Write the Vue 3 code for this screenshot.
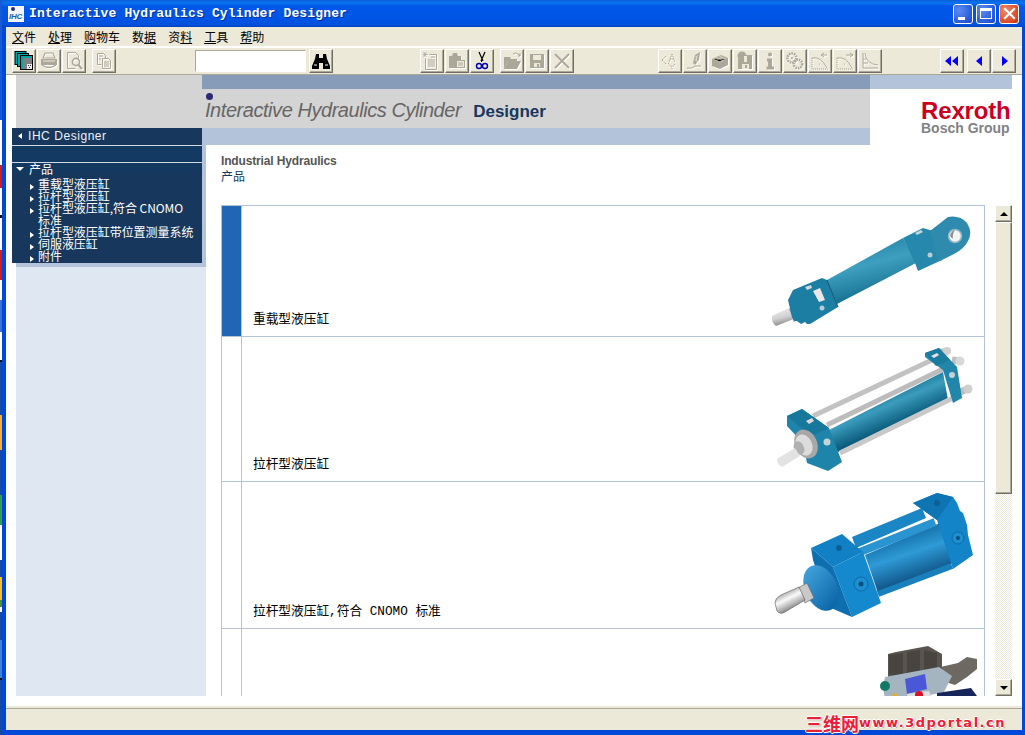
<template>
  <div class="window">
    <div class="desk"></div>
    <div class="frame">
      <!-- title bar -->
      <div class="titlebar">
        <div class="appicon"><i></i><span>IHC</span></div>
        <div class="title">Interactive Hydraulics Cylinder Designer</div>
        <div class="caption">
          <button class="cbtn min"><i></i></button>
          <button class="cbtn max"><i></i></button>
          <button class="cbtn close">
            <svg width="13" height="13" viewBox="0 0 13 13"><path d="M2 2l9 9M11 2l-9 9" stroke="#fff" stroke-width="2.2" stroke-linecap="square" /></svg>
          </button>
        </div>
      </div>

      <div class="inner">
        <div class="menubar">
          <span v-for="m in menus" :key="m.after + m.u">{{ m.before }}<u>{{ m.u }}</u>{{ m.after }}</span>
        </div>

        <div class="toolbar">
          <div v-for="g in toolGroups" :key="g.cls" class="tgroup" :class="g.cls">
            <template v-for="name in g.items" :key="name">
              <input v-if="name === 'input'" class="search" />
              <button v-else class="tbtn">
                <svg width="20" height="20" viewBox="0 0 20 20" :class="{ off: !enabled.includes(name) }" v-html="icons[name]"></svg>
              </button>
            </template>
          </div>
        </div>

        <div class="body">
          <!-- left navigation column -->
          <aside class="left">
            <div class="left-top"></div>
            <div class="left-rest">
              <div class="nav-shadow">
                <div class="nav">
                  <div class="nav-head"><b class="tri-left"></b>IHC Designer</div>
                  <div class="nav-gap"></div>
                  <div class="nav-group"><b class="tri-down"></b>产品</div>
                  <div v-for="n in navItems" :key="n" class="nav-item"><b class="tri-right"></b><span>{{ n }}</span></div>
                </div>
              </div>
            </div>
          </aside>

          <main class="right">
            <div class="banner">
              <div class="banner-main">
                <div class="strip-dark"></div>
                <div class="banner-title">
                  <i class="dot"></i>
                  <div><span class="bt-a">Interactive Hydraulics Cylinder</span><span class="bt-b">Designer</span></div>
                </div>
                <div class="strip-light"></div>
              </div>
              <div class="banner-logo">
                <div class="strip-end"></div>
                <div class="logo">
                  <div class="rexroth">Rexroth</div>
                  <div class="bosch">Bosch Group</div>
                </div>
              </div>
            </div>

            <div class="page">
              <div class="crumb">
                <div class="crumb-a">Industrial Hydraulics</div>
                <div class="crumb-b">产品</div>
              </div>
              <div class="list-area">
                <div class="list">
                  <!-- row 1 -->
                  <div class="row r1">
                    <div class="mark on"></div>
                    <div class="cell">
                      <span class="label">重载型液压缸</span>
                      <svg width="225" height="130" viewBox="760 206 225 130">
                        <defs>
                          <linearGradient id="t1" x1="0" y1="0" x2="0.35" y2="1">
                            <stop offset="0" stop-color="#167598" /><stop offset=".5" stop-color="#3f9fbf" /><stop offset="1" stop-color="#0f6a8c" />
                          </linearGradient>
                          <linearGradient id="s1" x1="0" y1="0" x2="0.3" y2="1">
                            <stop offset="0" stop-color="#f2f2f2" /><stop offset=".6" stop-color="#d0d0d0" /><stop offset="1" stop-color="#8a8a8a" />
                          </linearGradient>
                        </defs>
                        <path d="M772 316l17-8 7 10-20 8q-5-4-4-10z" fill="url(#s1)" />
                        <path d="M789 309l8-6 5 13-8 6z" fill="#a0a0a0" />
                        <path d="M827 280L903 238L916 263L837 304z" fill="url(#t1)" />
                        <path d="M788 300l5-10 29-12 5 2 11 27-28 17-3 0-2-2-4 2-4-3-3 0-2-4z" fill="#1c7ea3" />
                        <path d="M827 280l11 27" stroke="#0d566f" stroke-width="1" fill="none" />
                        <path d="M813 291l7-3 5 12-6 2z" fill="#e8e8e8" />
                        <path d="M805 287l6-2 1 3-5 2z" fill="#cfd8dc" /><circle cx="822" cy="308" r="2.5" fill="#b8ccd4" />
                        <path d="M903 238l20-10 10 3 9 29-24 11-3-8z" fill="#2588ac" />
                        <path d="M930 231l18-14q12-2 19 6 6 9 1 18-4 8-14 13l-14 7-2 0z" fill="#2e8bad" />
                        <circle cx="955" cy="236" r="6.5" fill="#f4f4f4" stroke="#8eb8c8" stroke-width="1.5" />
                        <path d="M950 236q1-5 5-6-3 4-2 9z" fill="#8b8b8b" />
                        <path d="M915 233l6-3 2 2-6 3z" fill="#c8d6dc" /><circle cx="930" cy="255" r="2.5" fill="#b8ccd4" />
                      </svg>
                    </div>
                  </div>
                  <!-- row 2 -->
                  <div class="row r2">
                    <div class="mark"></div>
                    <div class="cell">
                      <span class="label">拉杆型液压缸</span>
                      <svg width="225" height="144" viewBox="760 337 225 144">
                        <defs>
                          <linearGradient id="t2" gradientUnits="userSpaceOnUse" x1="880" y1="390" x2="895" y2="425">
                            <stop offset="0" stop-color="#0e6a8c" /><stop offset=".45" stop-color="#3c9cbc" /><stop offset="1" stop-color="#0a5c7c" />
                          </linearGradient>
                        </defs>
                        <path d="M940 352l8 0M952 360l8 1M960 392l8-3" stroke="#bdbdbd" stroke-width="7" />
                        <circle cx="947" cy="351" r="4" fill="#cfcfcf" /><circle cx="960" cy="361" r="4.5" fill="#d8d8d8" /><circle cx="968" cy="389" r="4.5" fill="#cfcfcf" />
                        <path d="M813 416L932 360" stroke="#c2c2c2" stroke-width="5" />
                        <path d="M827 431L943 372L948 400L838 452z" fill="url(#t2)" />
                        <path d="M827 425L943 369" stroke="#bcbcbc" stroke-width="5" />
                        <path d="M840 453L953 398" stroke="#c8c8c8" stroke-width="5" />
                        <path d="M925 353l14-5 18 19 5 31-9 5-10-33-18-13z" fill="#2186aa" />
                        <path d="M925 353l14-5 11 12-14 6z" fill="#1c7c9f" />
                        <path d="M931 356l6-3 2 2-5 3z" fill="#e4e4e4" />
                        <circle cx="952" cy="375" r="3" fill="#c4d2d8" />
                        <path d="M787 416l15-7 27 19 13 34-14 9-21-8-4-20-16-17z" fill="#1f84a9" />
                        <path d="M787 416l15-7 27 19-18 8z" fill="#18789b" />
                        <path d="M806 421l6-3 2 3-5 3z" fill="#dadada" />
                        <circle cx="827" cy="442" r="3.5" fill="#c6d3d9" />
                        <ellipse cx="806" cy="444" rx="11" ry="15" transform="rotate(-25 806 444)" fill="#a8a8a8" />
                        <ellipse cx="804" cy="445" rx="8" ry="11" transform="rotate(-25 804 445)" fill="#dcdcdc" />
                        <ellipse cx="799" cy="448" rx="5" ry="7" transform="rotate(-25 799 448)" fill="#b0b0b0" />
                        <path d="M777 459l18-11 5 8-18 11q-5-3-5-8z" fill="#e2e2e2" />
                      </svg>
                    </div>
                  </div>
                  <!-- row 3 -->
                  <div class="row r3">
                    <div class="mark"></div>
                    <div class="cell">
                      <span class="label">拉杆型液压缸,符合 CNOMO 标准</span>
                      <svg width="225" height="146" viewBox="760 482 225 146">
                        <defs>
                          <linearGradient id="t3" gradientUnits="userSpaceOnUse" x1="890" y1="530" x2="910" y2="590">
                            <stop offset="0" stop-color="#0b5f96" /><stop offset=".45" stop-color="#2e9ad6" /><stop offset="1" stop-color="#063f70" />
                          </linearGradient>
                          <linearGradient id="s3" gradientUnits="userSpaceOnUse" x1="785" y1="590" x2="795" y2="610">
                            <stop offset="0" stop-color="#9a9a9a" /><stop offset=".4" stop-color="#fafafa" /><stop offset="1" stop-color="#707070" />
                          </linearGradient>
                          <linearGradient id="g3" gradientUnits="userSpaceOnUse" x1="810" y1="570" x2="830" y2="610">
                            <stop offset="0" stop-color="#3f9ed8" /><stop offset="1" stop-color="#0a64a6" />
                          </linearGradient>
                        </defs>
                        <path d="M852 537L922 508L926 518L856 548z" fill="#1a86c4" />
                        <path d="M865 555L940 523L953 563L878 593z" fill="url(#t3)" />
                        <path d="M860 552L935 522" stroke="#2a94d0" stroke-width="8" />
                        <path d="M878 594L952 566" stroke="#1a80bc" stroke-width="6" />
                        <path d="M913 503l24-10 16 4 4 6 3 8 3 2 4 12 1 10 5 20-20 14-16-49z" fill="#1484c8" />
                        <path d="M913 503l24-10 16 4-16 23z" fill="#0e74b4" />
                        <circle cx="937" cy="503" r="3" fill="#0c5f96" /><circle cx="958" cy="538" r="6" fill="#1d8fd0" stroke="#0c6aa6" /><circle cx="958" cy="538" r="2" fill="#0a507e" />
                        <path d="M811 548l31-14 21 18-30 15z" fill="#1280c4" />
                        <path d="M833 567l30-15 18 51-29 14z" fill="#1489ce" />
                        <path d="M811 548l22 19 19 50-21-9-8-18-10-30z" fill="#0d6fb0" />
                        <circle cx="839" cy="548" r="3" fill="#0c5f96" /><circle cx="861" cy="584" r="7" fill="#1d8fd0" stroke="#0c6aa6" /><circle cx="861" cy="584" r="2.5" fill="#0a507e" />
                        <ellipse cx="821" cy="588" rx="16" ry="24" transform="rotate(-25 821 588)" fill="url(#g3)" />
                        <path d="M798 588l9-5 7 15-9 5z" fill="#c8c8c8" stroke="#606060" stroke-width=".6" />
                        <path d="M775 603q0-5 6-8l18-8 6 13-20 12q-5 3-8-1z" fill="url(#s3)" stroke="#555" stroke-width=".6" />
                      </svg>
                    </div>
                  </div>
                  <!-- row 4, clipped by the scroll area -->
                  <div class="row r4">
                    <div class="mark"></div>
                    <div class="cell">
                      <span class="label"></span>
                      <svg width="225" height="200" viewBox="760 629 225 200">
                        <path d="M936 668l22-5 9-6 10 2 0 10-10 8-12 8-19-6z" fill="#6e6862" />
                        <path d="M888 654l8-2 32-6 14 8 0 30-15 8-39-8z" fill="#5a544e" />
                        <path d="M889 655l14-2 0 25-14-4zM907 652l13-2 0 26-13 2zM924 650l13 3 0 24-13-2z" fill="#48443f" />
                        <path d="M885 677l54-10 13 9-8 16-56 12q-7-10-3-27z" fill="#a4b4c0" />
                        <circle cx="885" cy="686" r="5" fill="#107a66" />
                        <path d="M905 679l20-5 2 15-20 5z" fill="#4a58d8" />
                        <path d="M907 694l22-3 4 10-24 4z" fill="#e0e0e0" />
                        <circle cx="919" cy="695" r="4" fill="#d8102a" />
                        <circle cx="895" cy="696" r="3" fill="#d8b040" />
                        <path d="M937 693l34-5 6 8-40 6z" fill="#16265a" />
                      </svg>
                    </div>
                  </div>
                </div>
                <div class="scrollbar">
                  <div class="sb-btn"><b class="sb-up"></b></div>
                  <div class="sb-thumb"></div>
                  <div class="sb-track"></div>
                  <div class="sb-btn"><b class="sb-down"></b></div>
                </div>
              </div>
            </div>
          </main>
        </div>

        <div class="status">
          <div class="watermark"><span class="wm-cn">三维网</span><span class="wm-en">www.3dportal.cn</span></div>
        </div>
      </div>
    </div>
  </div>
</template>

<script setup>
const menus = [
  { before: '', u: '文', after: '件' },
  { before: '', u: '处', after: '理' },
  { before: '', u: '购', after: '物车' },
  { before: '数', u: '据', after: '' },
  { before: '资', u: '料', after: '' },
  { before: '', u: '工', after: '具' },
  { before: '', u: '帮', after: '助' }
]

const navItems = [
  '重载型液压缸',
  '拉杆型液压缸',
  '拉杆型液压缸,符合 CNOMO 标准',
  '拉杆型液压缸带位置测量系统',
  '伺服液压缸',
  '附件'
]

const toolGroups = [
  { cls: 'g1', items: ['stack', 'print', 'preview'] },
  { cls: 'g2', items: ['copy'] },
  { cls: 'g3', items: ['input'] },
  { cls: 'g4', items: ['binoc'] },
  { cls: 'g5', items: ['note', 'clip', 'cut'] },
  { cls: 'g6', items: ['open', 'save', 'del'] },
  { cls: 'g7', items: ['dims', 'pen', 'block', 'disk2', 'info', 'gears', 'curveL', 'curveR', 'curve'] },
  { cls: 'g8', items: ['first'] },
  { cls: 'g9', items: ['prev', 'next'] }
]

const enabled = ['stack', 'binoc', 'cut', 'first', 'prev', 'next']

// disabled icons all use the same grey
const G = '#aca899'
const icons = {
  stack: `<rect x="1" y="0.5" width="11" height="13" fill="#00a5a5" stroke="#000"/><rect x="3.5" y="2.5" width="11" height="13" fill="#00a5a5" stroke="#000"/><rect x="6.5" y="4.5" width="12" height="14" fill="#00a5a5" stroke="#000"/><rect x="9" y="7" width="9" height="11" fill="#808080"/><rect x="13" y="13" width="5" height="5" fill="#eee"/><path d="M14 14h1v1h-1zM16 14h1v1h-1zM15 16h1v1h-1z" fill="#333"/>`,
  print: `<path d="M6 2h8l2 5H4z" fill="none" stroke="${G}" stroke-width="1.2"/><path d="M2 8h16v6H2z" fill="${G}"/><path d="M4 10h12" stroke="#ece9d8"/><path d="M3 14q7 5 14 0" fill="none" stroke="${G}" stroke-width="1.4"/>`,
  preview: `<path d="M3.500 1.500h8l3 3v3M3.500 1.500v16h8" fill="none" stroke="${G}"/><circle cx="12" cy="11" r="3.600" fill="none" stroke="${G}" stroke-width="1.600"/><path d="M14.500 14l3.500 4" stroke="${G}" stroke-width="2"/>`,
  copy: `<path d="M3.500 2.500h6l2 2v3h-2M3.500 2.500v11h4" fill="none" stroke="${G}"/><path d="M8.500 7.500h6l2 2v8h-8z" fill="none" stroke="${G}"/><path d="M5 5h4M5 8h2M10 11h5M10 13h5M10 15h5" stroke="${G}"/>`,
  binoc: `<path d="M5 3h3v4h4V3h3l1 5 3 7v3h-7v-6h-4v6H1v-3l3-7z" fill="#000"/><path d="M3 14h3M14 14h3" stroke="#fff"/>`,
  note: `<path d="M7.500 3.500h7v15h-11v-11" fill="none" stroke="${G}"/><path d="M6 9h7M6 11h7M6 13h7M6 15h7M9 6h4" stroke="${G}"/><path d="M3 1v5M1 3.500h5M1.500 1.500l3 4M4.500 1.500l-3 4" stroke="${G}" stroke-width=".8"/>`,
  clip: `<path d="M2 5h3l1-3h4l1 3h3v4h-4v8H2z" fill="${G}"/><rect x="9.500" y="9.500" width="8" height="7" fill="#ece9d8" stroke="${G}"/><path d="M11 12h5M11 14h5" stroke="${G}"/>`,
  cut: `<path d="M7 1l4 9M13 1l-4 9" stroke="#000" stroke-width="1.2"/><path d="M9.500 9v2" stroke="#000"/><circle cx="7" cy="15" r="2.500" fill="none" stroke="#0000b0" stroke-width="1.400"/><circle cx="13" cy="15" r="2.500" fill="none" stroke="#0000b0" stroke-width="1.400"/>`,
  open: `<path d="M2 6h6l1 2h6v2H6l-4 8z" fill="${G}"/><path d="M6 10h13l-4 8H2z" fill="${G}"/><path d="M11 3q3-2 5 0l2 2-2 0M18 2v3" fill="none" stroke="${G}"/>`,
  save: `<path d="M3 3h14v14H3z" fill="${G}"/><rect x="6" y="4" width="8" height="5" fill="#ece9d8"/><rect x="7" y="12" width="6" height="4" fill="#ece9d8"/><rect x="10" y="13" width="2" height="3" fill="${G}"/>`,
  del: `<path d="M3 3l14 14M17 3L3 17" stroke="${G}" stroke-width="1.800"/>`,
  dims: `<path d="M2 9l4-4M2 9l4 4M12 3l-3 8M12 3l3 8M10 8h4M8 12l4 4 3-3M12 17v1" fill="none" stroke="${G}" stroke-dasharray="1.500 .7"/>`,
  pen: `<path d="M2 17h5l3-2 6 0" stroke="${G}" fill="none"/><path d="M8 12l2-8 5-3-1 8-4 5z" fill="${G}"/><path d="M11 5l1 6M13 4l-3 6" stroke="#ece9d8" stroke-width=".7"/>`,
  block: `<path d="M2 8l9-4 7 3v7l-8 4-8-3z" fill="${G}"/><path d="M3 8l7 3 7-3M6 6.500l7 3M9 5l7 3M6 9.500l6-3M9 11l6-3" stroke="#ece9d8" stroke-width=".6"/>`,
  disk2: `<circle cx="7" cy="5" r="4.500" fill="${G}"/><path d="M3 8h14v10H3z" fill="${G}"/><rect x="11" y="4" width="6" height="5" fill="${G}"/><rect x="9" y="5" width="3" height="6" fill="#ece9d8"/><rect x="7" y="13" width="7" height="5" fill="#ece9d8"/><rect x="10" y="14" width="2" height="3" fill="${G}"/>`,
  info: `<circle cx="10" cy="3.500" r="2" fill="${G}"/><path d="M7 7.500h5v8h2v3H6.500v-3H8v-5H7z" fill="${G}"/>`,
  gears: `<circle cx="7" cy="7" r="4.500" fill="none" stroke="${G}" stroke-width="2.500" stroke-dasharray="1.600 .9"/><circle cx="13" cy="13" r="4.200" fill="none" stroke="${G}" stroke-width="2.600" stroke-dasharray="1.600 .9"/><circle cx="7" cy="7" r="1" fill="${G}"/>`,
  curveL: `<path d="M2 7v11h16" fill="none" stroke="${G}" stroke-dasharray="1.200 .8"/><path d="M2 7q9-2 15 10" fill="none" stroke="${G}"/><path d="M9 13h1M11 4h6M11 4l3-2M11 4l3 2" stroke="${G}"/>`,
  curveR: `<path d="M2 7v11h16" fill="none" stroke="${G}" stroke-dasharray="1.200 .8"/><path d="M2 7q9-2 15 10" fill="none" stroke="${G}"/><path d="M9 13h1M11 4h7M18 4l-3-2M18 4l-3 2" stroke="${G}"/>`,
  curve: `<path d="M3 2v15h15" fill="none" stroke="${G}"/><path d="M5 2q1 11 13 12M3 8h3M3 12h5" fill="none" stroke="${G}"/>`,
  first: `<path d="M9 5v10L3 10zM16 5v10l-6-5z" fill="#0000ff"/>`,
  prev: `<path d="M13 5v10l-6-5z" fill="#0000ff"/>`,
  next: `<path d="M8 5v10l6-5z" fill="#0000ff"/>`
}
</script>

<style>
html, body { margin: 0; background: #0048d8; overflow: hidden; }
</style>

<style scoped>
.window { width: 1025px; height: 735px; display: flex; overflow: hidden; }

/* sliver of the desktop showing left of the window */
.desk {
  width: 2px; flex: none;
  background: linear-gradient(to bottom,
    #1a5ad0 0 120px, #fff 120px 165px, #c8202a 165px 188px, #fff 188px 215px, #111 215px 218px, #fff 218px 250px,
    #c8202a 250px 280px, #fff 280px 300px, #3a70d0 300px 332px, #fff 332px 360px, #111 360px 362px,
    #1a4a9a 362px 415px, #f0b040 415px 450px, #1a4a9a 450px 495px, #30a050 495px 525px, #fff 525px 560px,
    #1a4a9a 560px 577px, #f0c030 577px 600px, #509030 600px 607px, #fff 607px 612px, #1a4a9a 612px 640px,
    #4080d8 640px 678px, #111 678px 680px, #1a4a9a 680px 735px);
}
.frame {
  flex: 1; min-width: 0; display: flex; flex-direction: column;
  background: #0048d8;
}

.titlebar {
  height: 27px; flex: none; display: flex; align-items: center; padding-left: 6px;
  background: linear-gradient(to bottom, #0a5fd8 0, #0a74f0 3px, #0058e8 6px, #0054e3 20px, #0050dc 25px, #0040b8 27px);
}
.appicon {
  width: 16px; height: 16px; background: #f4f6fb; position: relative; overflow: hidden; flex: none;
}
.appicon i { position: absolute; left: 3px; top: 1px; width: 4px; height: 4px; border-radius: 50%; background: #22307a; }
.appicon span {
  position: absolute; left: 1px; bottom: 1px; font: italic bold 8px "Liberation Sans", sans-serif; color: #1f5faa; letter-spacing: -.3px;
}
.title {
  margin-left: 5px; color: #fff; font: bold 13px "Liberation Mono", monospace; letter-spacing: .15px;
  text-shadow: 1px 1px 0 #0030a0; white-space: nowrap;
}
.caption { margin-left: auto; display: flex; gap: 3px; padding-right: 6px; }
.cbtn {
  width: 20px; height: 20px; padding: 0; border: 1px solid #fff; border-radius: 3px; position: relative;
  display: flex; align-items: center; justify-content: center;
}
.min, .max { background: radial-gradient(circle at 30% 30%, #5b8cf0, #2a5ad8 70%, #1c44b8); }
.close { background: radial-gradient(circle at 30% 30%, #ec8a6c, #dc4a28 70%, #b83010); }
.min i { position: absolute; left: 4px; bottom: 3px; width: 7px; height: 3px; background: #fff; }
.max i { width: 12px; height: 11px; border: 1px solid #fff; border-top-width: 3px; box-sizing: border-box; }

.inner {
  flex: 1; min-height: 0; margin: 0 3px 5px 4px; display: flex; flex-direction: column; background: #fff;
}

.menubar {
  height: 19px; flex: none; background: #ece9d8; display: flex; gap: 12px; padding-left: 6px; align-items: center;
  font: 12px "Noto Sans CJK SC", sans-serif; color: #000; line-height: 19px;
}
.menubar u { text-underline-offset: 1px; }

.toolbar {
  height: 25px; flex: none; margin-top: 2px; background: #ece9d8; display: flex; gap: 1px; align-items: center;
  padding: 0 0 1px 6px; border-bottom: 1px solid #aca899; box-shadow: 0 -1px 0 #fff;
}
.tgroup { display: flex; gap: 1px; }
.g2 { margin-left: 5px; }
.g3 { margin-left: 78px; }
.g4 { margin-left: 2px; }
.g5 { margin-left: 86px; }
.g6 { margin-left: 5px; }
.g7 { margin-left: 83px; }
.g8 { margin-left: 57px; }
.g9 { margin-left: 2px; }
.tbtn {
  width: 24px; height: 24px; padding: 0; background: #ece9d8; display: flex; align-items: center; justify-content: center;
  border: 1px solid; border-color: #fff #716f64 #716f64 #fff; box-shadow: inset -1px -1px 0 #aca899;
  box-sizing: border-box;
}
.tbtn svg.off { filter: drop-shadow(1px 1px 0 #fff); }
.search {
  width: 111px; height: 22px; box-sizing: border-box; margin: 1px 0; padding: 0; background: #fff;
  border: 1px solid; border-color: #aca899 #fff #fff #aca899; outline: none;
}

.body { flex: 1; min-height: 0; display: flex; background: #fff; }

.left { width: 190px; margin-left: 10px; flex: none; display: flex; flex-direction: column; height: 621px; position: relative; z-index: 1; }
.left-top { height: 53px; width: 186px; background: #d4d4d4; flex: none; }
.left-rest { flex: 1; background: #dfe8f2; }
.nav-shadow { background: #b3c3da; padding-bottom: 4px; }
.nav {
  width: 190px; margin-left: -4px; background: #17375c; color: #fff; height: 135px; box-sizing: border-box;
  font: 12px/12px "Noto Sans CJK SC", sans-serif;
}
.nav-head {
  height: 18px; padding: 0 0 1px 6px; box-sizing: border-box; border-bottom: 1px solid #d0d8e0;
  font: 12px/16px "Liberation Sans", sans-serif; letter-spacing: .55px;
  color: #eef2f6; display: flex; align-items: center;
}
.tri-left { border: 3px solid transparent; border-right: 4px solid #fff; border-left: 0; margin-right: 6px; }
.nav-gap { height: 16px; border-bottom: 1px solid #d0d8e0; background: #123a63; }
.nav-group { height: 15px; display: flex; align-items: flex-start; padding-left: 4px; background: linear-gradient(#123a63, #17375c); }
.tri-down { border: 4px solid transparent; border-top: 4px solid #fff; border-bottom: 0; margin: 4px 5px 0 0; }
.nav-item { display: flex; padding-left: 18px; }
.nav-item span { width: 158px; letter-spacing: -.05px; }
.tri-right { border: 3px solid transparent; border-left: 4px solid #fff; border-right: 0; height: 0; margin: 6px 4px 0 0; flex: none; }

.right { flex: 1; min-width: 0; display: flex; flex-direction: column; }
.banner { height: 70px; flex: none; margin-left: -4px; display: flex; position: relative; z-index: 0; }
.banner-main { width: 668px; flex: none; display: flex; flex-direction: column; background: #d4d4d4; }
.strip-dark { height: 14px; background: #879cb9; flex: none; }
.banner-title { flex: 1; padding: 4px 0 0 3px; }
.dot { display: block; width: 7px; height: 7px; border-radius: 50%; background: #2a2a72; margin-left: 1px; }
.banner-title > div { display: flex; align-items: baseline; margin-top: -2px; white-space: nowrap; }
.bt-a { font: italic 20px/24px "Liberation Sans", sans-serif; color: #666; letter-spacing: -.45px; }
.bt-b { font: bold 17px/24px "Liberation Sans", sans-serif; color: #17375c; margin-left: 12px; }
.strip-light { height: 17px; background: #b3c3da; flex: none; }
.banner-logo { flex: 1; display: flex; flex-direction: column; }
.strip-end { height: 14px; background: #b3c3da; margin-right: 10px; flex: none; }
.logo { padding: 11px 0 0 51px; }
.rexroth { font: bold 24px/21px "Liberation Sans", sans-serif; color: #cc0022; letter-spacing: -.15px; }
.bosch { font: bold 14px/15px "Liberation Sans", sans-serif; color: #808285; }

.page { flex: 1; min-height: 0; padding-left: 15px; padding-right: 10px; }
.crumb { height: 60px; padding-top: 9px; box-sizing: border-box; }
.crumb-a { font: bold 12px/15px "Liberation Sans", sans-serif; color: #555; letter-spacing: -.15px; }
.crumb-b { font: 12px/15px "Noto Sans CJK SC", sans-serif; color: #17375c; margin-top: -1px; }
.list-area { display: flex; gap: 10px; height: 491px; }
.list {
  width: 764px; height: 491px; overflow: hidden; box-sizing: border-box; flex: none;
  border: 1px solid #b3c3da; border-bottom: 0;
}
.row { display: flex; border-bottom: 1px solid #b3c3da; }
.r1 { height: 130px; }
.r2 { height: 144px; }
.r3 { height: 146px; }
.r4 { height: 200px; border-bottom: 0; }
.mark { width: 19px; flex: none; border-right: 1px solid #b3c3da; }
.mark.on { background: #2166b5; }
.cell { flex: 1; min-width: 0; display: flex; justify-content: space-between; }
.label {
  align-self: flex-end; padding: 0 0 9px 11px; white-space: pre;
  font: 12.7px/15px "Liberation Mono", "Noto Sans CJK SC", sans-serif; color: #000;
}
.cell svg { display: block; flex: none; margin-right: -1px; }

.scrollbar { width: 17px; display: flex; flex-direction: column; flex: none; }
.sb-btn, .sb-thumb {
  background: #ece9d8; border: 1px solid; border-color: #fff #716f64 #716f64 #fff; box-sizing: border-box;
  box-shadow: inset -1px -1px 0 #aca899;
}
.sb-btn { height: 17px; display: flex; align-items: center; justify-content: center; }
.sb-thumb { height: 272px; }
.sb-track {
  flex: 1;
  background: repeating-conic-gradient(#ece9d8 0 25%, #fff 0 50%) 0 0 / 2px 2px;
}
.sb-up { border: 4px solid transparent; border-bottom: 4px solid #000; border-top: 0; }
.sb-down { border: 4px solid transparent; border-top: 4px solid #000; border-bottom: 0; }

.status {
  height: 21px; flex: none; margin-top: auto; background: #ece9d8; border-top: 1px solid #aca899; box-shadow: 0 -2px 0 #ece9d8;
  position: relative;
}
.watermark {
  position: absolute; right: 16px; top: 5px; display: flex; align-items: center; color: #e8203a; white-space: nowrap;
  text-shadow: 1px 0 0 #fff, -1px 0 0 #fff, 0 1px 0 #fff, 0 -1px 0 #fff, 1px 1px 1px #888;
}
.wm-cn { font: bold 18px/18px "Noto Sans CJK SC", sans-serif; }
.wm-en { font: bold 13px/18px "DejaVu Sans", sans-serif; letter-spacing: 1.5px; }
</style>
